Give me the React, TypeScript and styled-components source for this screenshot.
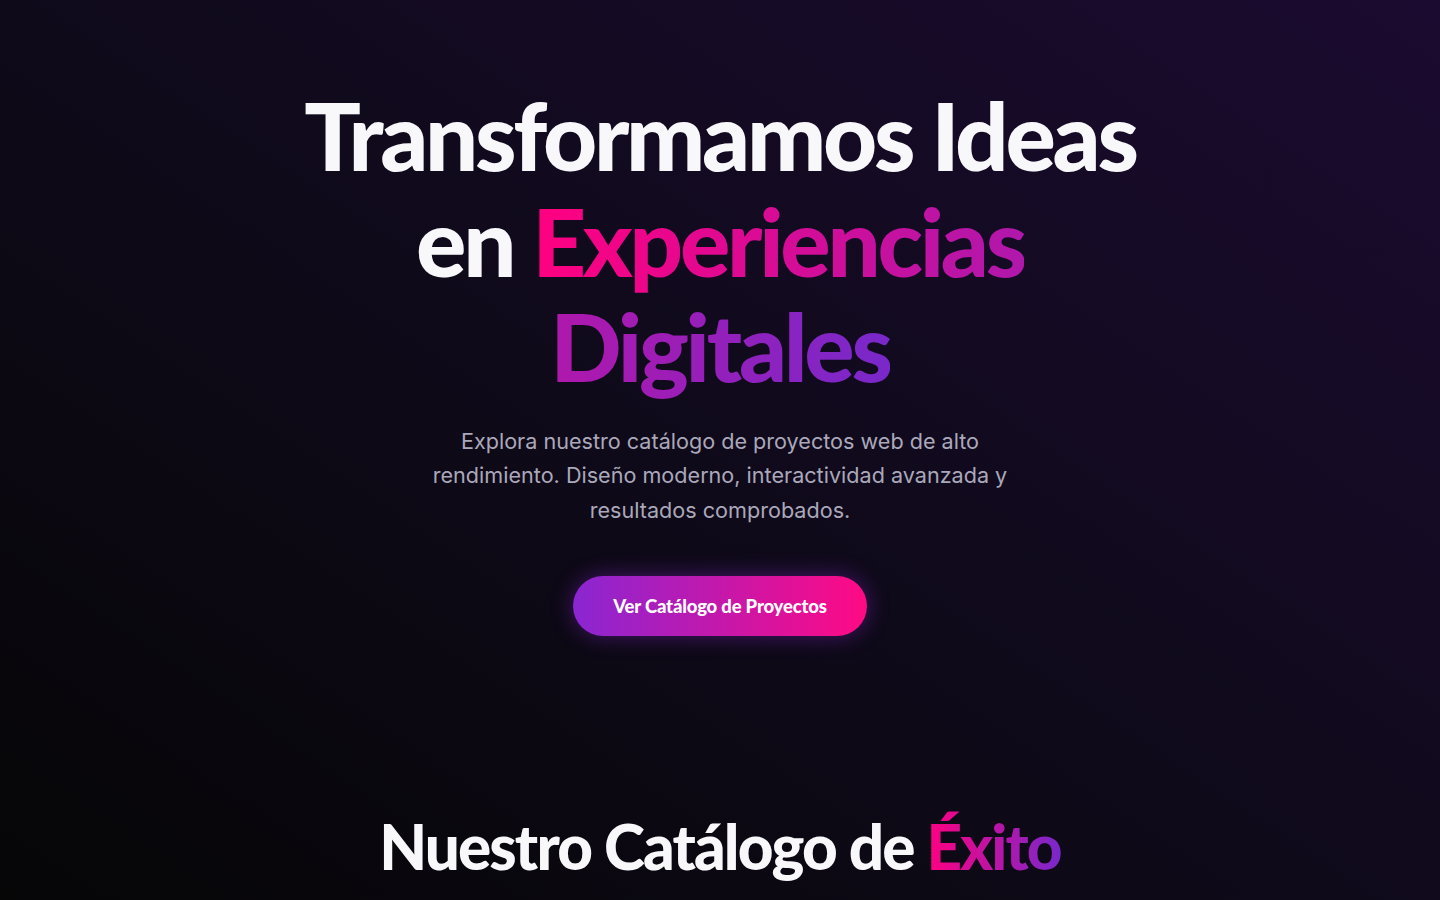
import styled, { createGlobalStyle } from 'styled-components';

const EstiloGlobal = createGlobalStyle`
  * {
    box-sizing: border-box;
  }
  html, body {
    margin: 0;
    padding: 0;
    background: #050507;
  }
  body {
    font-family: Inter, "Noto Sans", sans-serif;
    color: #ffffff;
    -webkit-font-smoothing: antialiased;
  }
`;

const Pagina = styled.main`
  min-height: 100vh;
  background: linear-gradient(to top right, #050505 0%, #0f0a1a 50%, #1b0b30 100%);
  overflow: hidden;
`;

const Hero = styled.section`
  display: flex;
  flex-direction: column;
  align-items: center;
  text-align: center;
  padding: 82px 20px 92px;
`;

const Titulo = styled.h1`
  margin: 0;
  max-width: 900px;
  font-family: Lato, "Open Sans", sans-serif;
  font-weight: 900;
  font-size: 94px;
  line-height: 1.123;
  letter-spacing: -0.035em;
  color: #f8f8fb;
`;

const Degradado = styled.span`
  background: linear-gradient(90deg, #ff0080 0%, #7928ca 100%);
  -webkit-background-clip: text;
  background-clip: text;
  -webkit-text-fill-color: transparent;
  color: transparent;
`;

const Descripcion = styled.p`
  margin: 25px 0 0;
  max-width: 600px;
  font-family: Inter, "Noto Sans", sans-serif;
  font-size: 21.6px;
  line-height: 1.6;
  color: #aaa8ba;
`;

const Boton = styled.button`
  margin-top: 49px;
  border: none;
  border-radius: 50px;
  padding: 18px 40px;
  font-family: Lato, "Open Sans", sans-serif;
  font-weight: 900;
  font-size: 18.5px;
  line-height: 24px;
  letter-spacing: -0.01em;
  color: #ffffff;
  background: linear-gradient(90deg, #8a26d2 0%, #ff0a84 100%);
  box-shadow: 0 0 22px rgba(138, 38, 210, 0.45);
  cursor: pointer;
`;

const Catalogo = styled.section`
  display: flex;
  flex-direction: column;
  align-items: center;
  padding: 81px 20px 80px;
`;

const TituloSeccion = styled.h2`
  margin: 0;
  font-family: Lato, "Open Sans", sans-serif;
  font-weight: 900;
  font-size: 62px;
  line-height: 1.2;
  letter-spacing: -0.03em;
  color: #f8f8fb;
  text-align: center;
`;

export default function App() {
  return (
    <>
      <EstiloGlobal />
      <Pagina>
        <Hero>
          <Titulo>
            Transformamos Ideas en{' '}
            <Degradado>Experiencias Digitales</Degradado>
          </Titulo>
          <Descripcion>
            Explora nuestro catálogo de proyectos web de alto rendimiento.
            Diseño moderno, interactividad avanzada y resultados comprobados.
          </Descripcion>
          <Boton>Ver Catálogo de Proyectos</Boton>
        </Hero>
        <Catalogo>
          <TituloSeccion>
            Nuestro Catálogo de <Degradado>Éxito</Degradado>
          </TituloSeccion>
        </Catalogo>
      </Pagina>
    </>
  );
}
